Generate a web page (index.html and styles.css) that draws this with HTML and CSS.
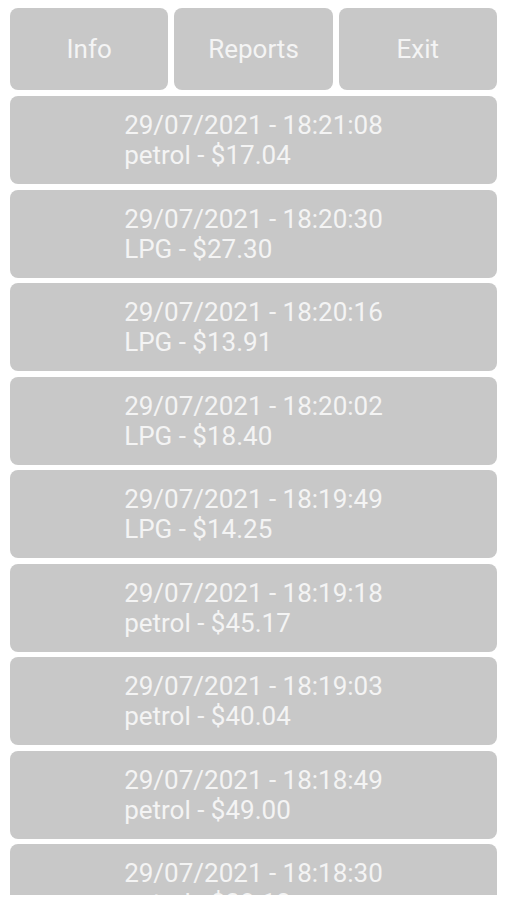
FILE: index.html
```html
<!DOCTYPE html>
<html lang="en">
<head>
    <meta charset="UTF-8">
    <title>Fuel Log</title>
    <link rel="stylesheet" href="styles.css">
</head>
<body>
    <div class="screen">
        <div class="toolbar">
            <button class="tool-btn">Info</button>
            <button class="tool-btn">Reports</button>
            <button class="tool-btn">Exit</button>
        </div>

        <div class="entries">
            <div class="entry"><div class="entry-text">29/07/2021 - 18:21:08<br>petrol - $17.04</div></div>
            <div class="entry"><div class="entry-text">29/07/2021 - 18:20:30<br>LPG - $27.30</div></div>
            <div class="entry"><div class="entry-text">29/07/2021 - 18:20:16<br>LPG - $13.91</div></div>
            <div class="entry"><div class="entry-text">29/07/2021 - 18:20:02<br>LPG - $18.40</div></div>
            <div class="entry"><div class="entry-text">29/07/2021 - 18:19:49<br>LPG - $14.25</div></div>
            <div class="entry"><div class="entry-text">29/07/2021 - 18:19:18<br>petrol - $45.17</div></div>
            <div class="entry"><div class="entry-text">29/07/2021 - 18:19:03<br>petrol - $40.04</div></div>
            <div class="entry"><div class="entry-text">29/07/2021 - 18:18:49<br>petrol - $49.00</div></div>
            <div class="entry"><div class="entry-text">29/07/2021 - 18:18:30<br>petrol - $38.12</div></div>
        </div>
    </div>
</body>
</html>
```

FILE: styles.css
```css
body {
    margin: 0;
    background: #fff;
    font-family: Roboto, "Noto Sans", sans-serif;
}
.screen {
    padding: 8px 9px 0 10px;
    height: 887px;
    display: flex;
    flex-direction: column;
    gap: 6px;
}
.toolbar {
    display: grid;
    grid-template-columns: 1fr 1fr 1fr;
    gap: 6px;
}
.tool-btn {
    height: 82px;
    background: #c8c8c8;
    color: #f4f4f4;
    border: none;
    border-radius: 8px;
    font-family: inherit;
    font-size: 26px;
    padding: 0;
}
.entries {
    flex: 1;
    overflow: hidden;
    display: flex;
    flex-direction: column;
    gap: 5.5px;
}
.entry {
    flex: none;
    height: 88px;
    background: #c8c8c8;
    border-radius: 8px;
    display: flex;
    align-items: center;
    justify-content: center;
}
.entry-text {
    color: #f4f4f4;
    font-size: 26px;
    text-align: left;
}
```
